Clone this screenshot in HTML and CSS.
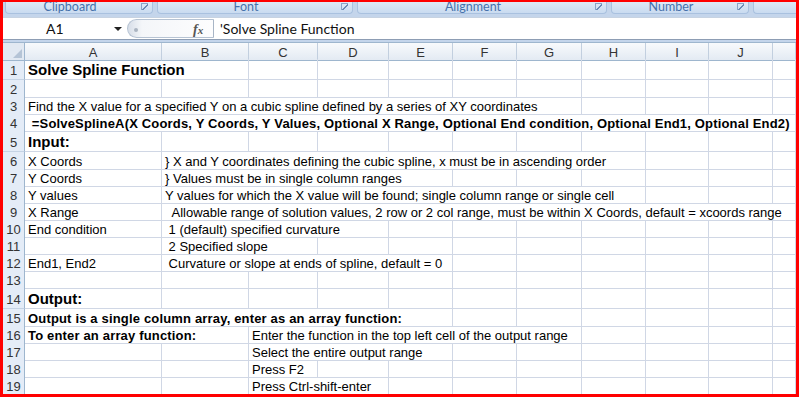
FILE: index.html
```html
<!DOCTYPE html>
<html lang="en">
<head>
    <meta charset="UTF-8">
    <title>Solve Spline Function</title>
    <link rel="stylesheet" href="styles.css">
</head>
<body>
    <div class="window">
        <div class="ribbon">
            <div class="group clipboard">Clipboard<span class="launcher"></span></div>
            <div class="group font">Font<span class="launcher"></span></div>
            <div class="group alignment">Alignment<span class="launcher"></span></div>
            <div class="group number">Number<span class="launcher"></span></div>
            <div class="group rest"></div>
        </div>

        <div class="formula-bar">
            <div class="name-box">
                <span class="name">A1</span>
                <span class="arrow"></span>
            </div>
            <div class="fx-box">
                <span class="dot"></span>
                <span class="fx">f<span class="fx-x">x</span></span>
            </div>
            <div class="formula">'Solve Spline Function</div>
        </div>

        <div class="sheet" id="sheet">
            <div class="row header-row">
                <div class="corner"><span class="corner-mark"></span></div>
                <div class="col-head">A</div>
                <div class="col-head">B</div>
                <div class="col-head">C</div>
                <div class="col-head">D</div>
                <div class="col-head">E</div>
                <div class="col-head">F</div>
                <div class="col-head">G</div>
                <div class="col-head">H</div>
                <div class="col-head">I</div>
                <div class="col-head">J</div>
                <div class="col-head"></div>
            </div>
        </div>
    </div>

    <script>
        // column widths A..K, same as --cols in styles.css
        const widths = [137, 87, 69, 71, 64, 64, 65, 64, 63, 64, 23];

        const rows = [
            { tall: true, cells: [[0, 'Solve Spline Function', 'title']] },
            { cells: [] },
            { cells: [[0, 'Find the X value for a specified Y on a cubic spline defined by a series of XY coordinates']] },
            { cells: [[0, ' =SolveSplineA(X Coords, Y Coords, Y Values, Optional X Range, Optional End condition, Optional End1, Optional End2)', 'bold']] },
            { tall: true, cells: [[0, 'Input:', 'title']] },
            { cells: [[0, 'X Coords'], [1, '} X and Y coordinates defining the cubic spline, x must be in ascending order']] },
            { cells: [[0, 'Y Coords'], [1, '} Values must be in single column ranges']] },
            { cells: [[0, 'Y values'], [1, 'Y values for which the X value will be found; single column range or single cell']] },
            { cells: [[0, 'X Range'], [1, '  Allowable range of solution values, 2 row or 2 col range, must be within X Coords, default = xcoords range']] },
            { cells: [[0, 'End condition'], [1, ' 1 (default) specified curvature']] },
            { cells: [[1, ' 2 Specified slope']] },
            { cells: [[0, 'End1, End2'], [1, ' Curvature or slope at ends of spline, default = 0']] },
            { cells: [] },
            { tall: true, cells: [[0, 'Output:', 'title']] },
            { cells: [[0, 'Output is a single column array, enter as an array function:', 'bold']] },
            { cells: [[0, 'To enter an array function:', 'bold'], [2, 'Enter the function in the top left cell of the output range']] },
            { cells: [[2, 'Select the entire output range']] },
            { cells: [[2, 'Press F2']] },
            { cells: [[2, 'Press Ctrl-shift-enter']] }
        ];

        const sheet = document.getElementById('sheet');

        function addCell(rowEl, text, kind) {
            const cell = document.createElement('div');
            cell.className = 'cell';
            const span = document.createElement('span');
            span.className = 'text' + (kind ? ' ' + kind : '');
            span.textContent = text;
            cell.appendChild(span);
            rowEl.appendChild(cell);
            return cell;
        }

        rows.forEach((row, i) => {
            const rowEl = document.createElement('div');
            rowEl.className = 'row' + (row.tall ? ' tall' : '');
            const head = document.createElement('div');
            head.className = 'row-head';
            head.textContent = i + 1;
            rowEl.appendChild(head);
            sheet.appendChild(rowEl);

            const filled = row.cells.map(c => c[0]);
            let col = 0;
            while (col < widths.length) {
                const data = row.cells.find(c => c[0] === col);
                if (!data) {
                    addCell(rowEl, '');
                    col++;
                    continue;
                }
                // text spills into the empty cells on its right, like Excel
                const next = filled.find(c => c > col) ?? widths.length;
                const cell = addCell(rowEl, data[1], data[2]);
                const needed = cell.firstChild.offsetWidth + 4;
                let span = 1;
                let room = widths[col];
                while (room < needed && col + span < next) {
                    room += widths[col + span];
                    span++;
                }
                cell.style.gridColumn = 'span ' + span;
                col += span;
            }
        });
    </script>
</body>
</html>
```

FILE: styles.css
```css
* {
    margin: 0;
    padding: 0;
    box-sizing: border-box;
}

body {
    width: 799px;
    height: 397px;
    overflow: hidden;
    font-family: 'Liberation Sans', Arial, sans-serif;
    background: #fff;
}

.window {
    width: 799px;
    height: 397px;
    border: 3px solid #f00;
    border-top-width: 2px;
    background: #c4d5eb;
    overflow: hidden;
}

/* ribbon group labels */
.ribbon {
    display: flex;
    gap: 4px;
    height: 12px;
    padding-left: 2px;
}

.group {
    position: relative;
    height: 12px;
    padding-right: 18px;
    background: linear-gradient(#dfe9f6, #c9dbf0);
    border: 1px solid #a9c1df;
    border-top: none;
    border-radius: 0 0 4px 4px;
    color: #4671ab;
    font-family: Lato, 'Open Sans', sans-serif;
    font-size: 12.5px;
    line-height: 9px;
    text-align: center;
}

.clipboard { width: 148px; }
.font { width: 196px; }
.alignment { width: 250px; }
.number { width: 138px; }
.rest { flex: 1; border-right: none; border-radius: 0 0 0 4px; }

.launcher {
    position: absolute;
    right: 4px;
    top: 1px;
    width: 7px;
    height: 7px;
    border-top: 1px solid #8aa4c8;
    border-left: 1px solid #8aa4c8;
    background: linear-gradient(135deg, transparent 45%, #6d8bb5 45%, #6d8bb5 60%, transparent 60%);
}

/* formula bar */
.formula-bar {
    display: flex;
    height: 23px;
    margin-top: 3px;
    background: #fff;
    border-top: 1px solid #c7d3e2;
    border-bottom: 1px solid #8d9db4;
    font-family: Lato, 'Open Sans', sans-serif;
}

.name-box {
    display: flex;
    align-items: center;
    width: 124px;
    padding-left: 43px;
}

.name {
    width: 68px;
    font-size: 14px;
    color: #111;
}

.arrow {
    width: 0;
    height: 0;
    border-left: 4px solid transparent;
    border-right: 4px solid transparent;
    border-top: 4px solid #222;
}

.fx-box {
    position: relative;
    width: 87px;
    margin: 1px 0;
    border: 1px solid #b6c3d3;
    border-right-color: #a8b5c6;
    border-radius: 11px 0 0 11px;
    background: linear-gradient(90deg, #d7dee8 0, #f4f6f9 14px, #fdfdfe 100%);
}

.dot {
    position: absolute;
    left: 6px;
    top: 8px;
    width: 4px;
    height: 4px;
    border-radius: 50%;
    background: #aab4c1;
}

.fx {
    position: absolute;
    left: 65px;
    top: 2px;
    font-family: 'Liberation Serif', serif;
    font-style: italic;
    font-weight: bold;
    font-size: 14px;
    color: #555;
}

.fx-x {
    font-size: 11px;
}

.formula {
    flex: 1;
    padding-left: 6px;
    font-size: 14px;
    line-height: 21px;
    color: #111;
}

/* sheet grid */
.sheet {
    --cols: 22px 137px 87px 69px 71px 64px 64px 65px 64px 63px 64px 1fr;
    margin-top: 2px;
    background: #fff;
    border-top: 1px solid #9eb6ce;
}

.row {
    display: grid;
    grid-template-columns: var(--cols);
    height: 17px;
}

.row.tall {
    height: 21px;
}

.header-row {
    height: 16px;
}

.corner {
    position: relative;
    background: #e2e9f2;
    border-right: 1px solid #9eb6ce;
    border-bottom: 1px solid #9eb6ce;
}

.corner-mark {
    position: absolute;
    right: 2px;
    bottom: 2px;
    width: 0;
    height: 0;
    border-left: 9px solid transparent;
    border-bottom: 9px solid #b5c4d6;
}

.col-head {
    display: flex;
    justify-content: center;
    align-items: center;
    padding-top: 2px;
    background: linear-gradient(#f8fafc, #e3eaf3);
    border-right: 1px solid #c2cfdf;
    border-bottom: 1px solid #9eb6ce;
    font-size: 13px;
    color: #333;
}

.row-head {
    display: flex;
    justify-content: center;
    align-items: center;
    padding-top: 2px;
    background: #e4ecf7;
    border-right: 1px solid #9eb6ce;
    border-bottom: 1px solid #c5d3e4;
    font-size: 13px;
    color: #333;
}

.cell {
    display: flex;
    align-items: flex-end;
    padding: 0 0 0 3px;
    border-right: 1px solid #d0d7e5;
    border-bottom: 1px solid #d0d7e5;
    overflow: hidden;
    font-size: 13px;
    line-height: 15px;
    color: #000;
}

.text {
    white-space: pre;
}

.text.bold {
    font-weight: bold;
    letter-spacing: 0.17px;
}

.text.title {
    font-weight: bold;
    font-size: 15px;
    line-height: 18px;
}
```
